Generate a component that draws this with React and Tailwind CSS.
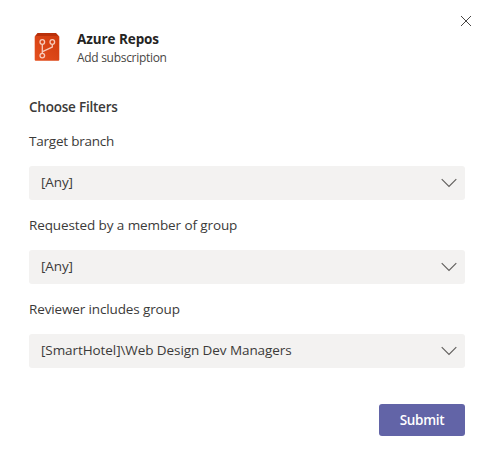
import React from 'react';

const fields = [
  { label: 'Target branch', value: '[Any]', labelClass: 'tracking-[-0.22px]', valueClass: 'tracking-[-0.1px]' },
  { label: 'Requested by a member of group', value: '[Any]', labelClass: 'tracking-[-0.1px]', valueClass: 'tracking-[-0.1px]' },
  { label: 'Reviewer includes group', value: '[SmartHotel]\\Web Design Dev Managers', labelClass: 'tracking-[-0.13px]', valueClass: 'tracking-[-0.08px]' },
];

function ReposLogo() {
  return (
    <svg className="shrink-0" width="26" height="28" viewBox="0 0 26 28" fill="none">
      <defs>
        <linearGradient id="repos" x1="0" y1="1" x2="1" y2="0">
          <stop offset="0" stopColor="#e5501f" />
          <stop offset="1" stopColor="#cf3a0c" />
        </linearGradient>
      </defs>
      <path d="M3.5 0h18.5L25.3 3.5H0.7z" fill="#b9300a" />
      <rect x="0.7" y="3" width="24.6" height="24.7" rx="1" fill="url(#repos)" />
      <g stroke="#f7cbbb" strokeWidth="1.3">
        <circle cx="8.3" cy="9" r="2.3" />
        <circle cx="18.3" cy="9" r="2.3" />
        <circle cx="8.3" cy="22.6" r="2.3" />
        <path d="M8.3 11.4v8.8M18.3 11.4v2.8L8.5 18.6" />
      </g>
    </svg>
  );
}

function Field({ label, value, labelClass, valueClass }) {
  return (
    <div className="flex flex-col gap-[15px]">
      <label className={`h-5 leading-5 ${labelClass}`}>{label}</label>
      <button className="flex h-[34px] items-center justify-between rounded-[3px] bg-[#f3f2f1] pr-2 pl-3 text-left">
        <span className={`-mt-[3px] leading-5 ${valueClass}`}>{value}</span>
        <svg width="16" height="10" viewBox="0 0 16 10" fill="none" stroke="#605e5c" strokeWidth="1.1">
          <path d="M0.7 1.2 8 8.5l7.3-7.3" />
        </svg>
      </button>
    </div>
  );
}

export default function App() {
  return (
    <div className="flex h-[452px] w-[497px] flex-col bg-white pr-8 pl-[29px] font-['Open_Sans','Noto_Sans',sans-serif] text-[13.5px] text-[#3b3a39]">
      <header className="flex h-[97px] justify-between">
        <div className="flex gap-[17px] pt-[33px] pl-[5px]">
          <ReposLogo />
          <div className="-mt-1 flex flex-col">
            <h1 className="h-5 text-[13.5px] leading-5 font-bold tracking-[-0.08px] text-[#252423]">Azure Repos</h1>
            <p className="h-[18px] text-[12px] leading-[18px] tracking-[-0.3px] text-[#484644]">Add subscription</p>
          </div>
        </div>
        <button className="-mr-[7px] h-3 pt-[15px]" aria-label="Close">
          <svg width="12" height="12" viewBox="0 0 12 12" stroke="#484644" strokeWidth="1">
            <path d="M1 1l10 10M11 1L1 11" />
          </svg>
        </button>
      </header>
      <h2 className="h-5 text-[13.5px] leading-5 font-semibold tracking-[-0.22px]">Choose Filters</h2>
      <main className="mt-[14px] flex flex-col gap-[15px]">
        {fields.map((field) => (
          <Field key={field.label} {...field} />
        ))}
      </main>
      <button className="mt-9 flex h-8 w-[86px] items-center justify-center self-end rounded-[3px] bg-[#6264a7] font-semibold tracking-[-0.3px] text-white">
        Submit
      </button>
    </div>
  );
}
